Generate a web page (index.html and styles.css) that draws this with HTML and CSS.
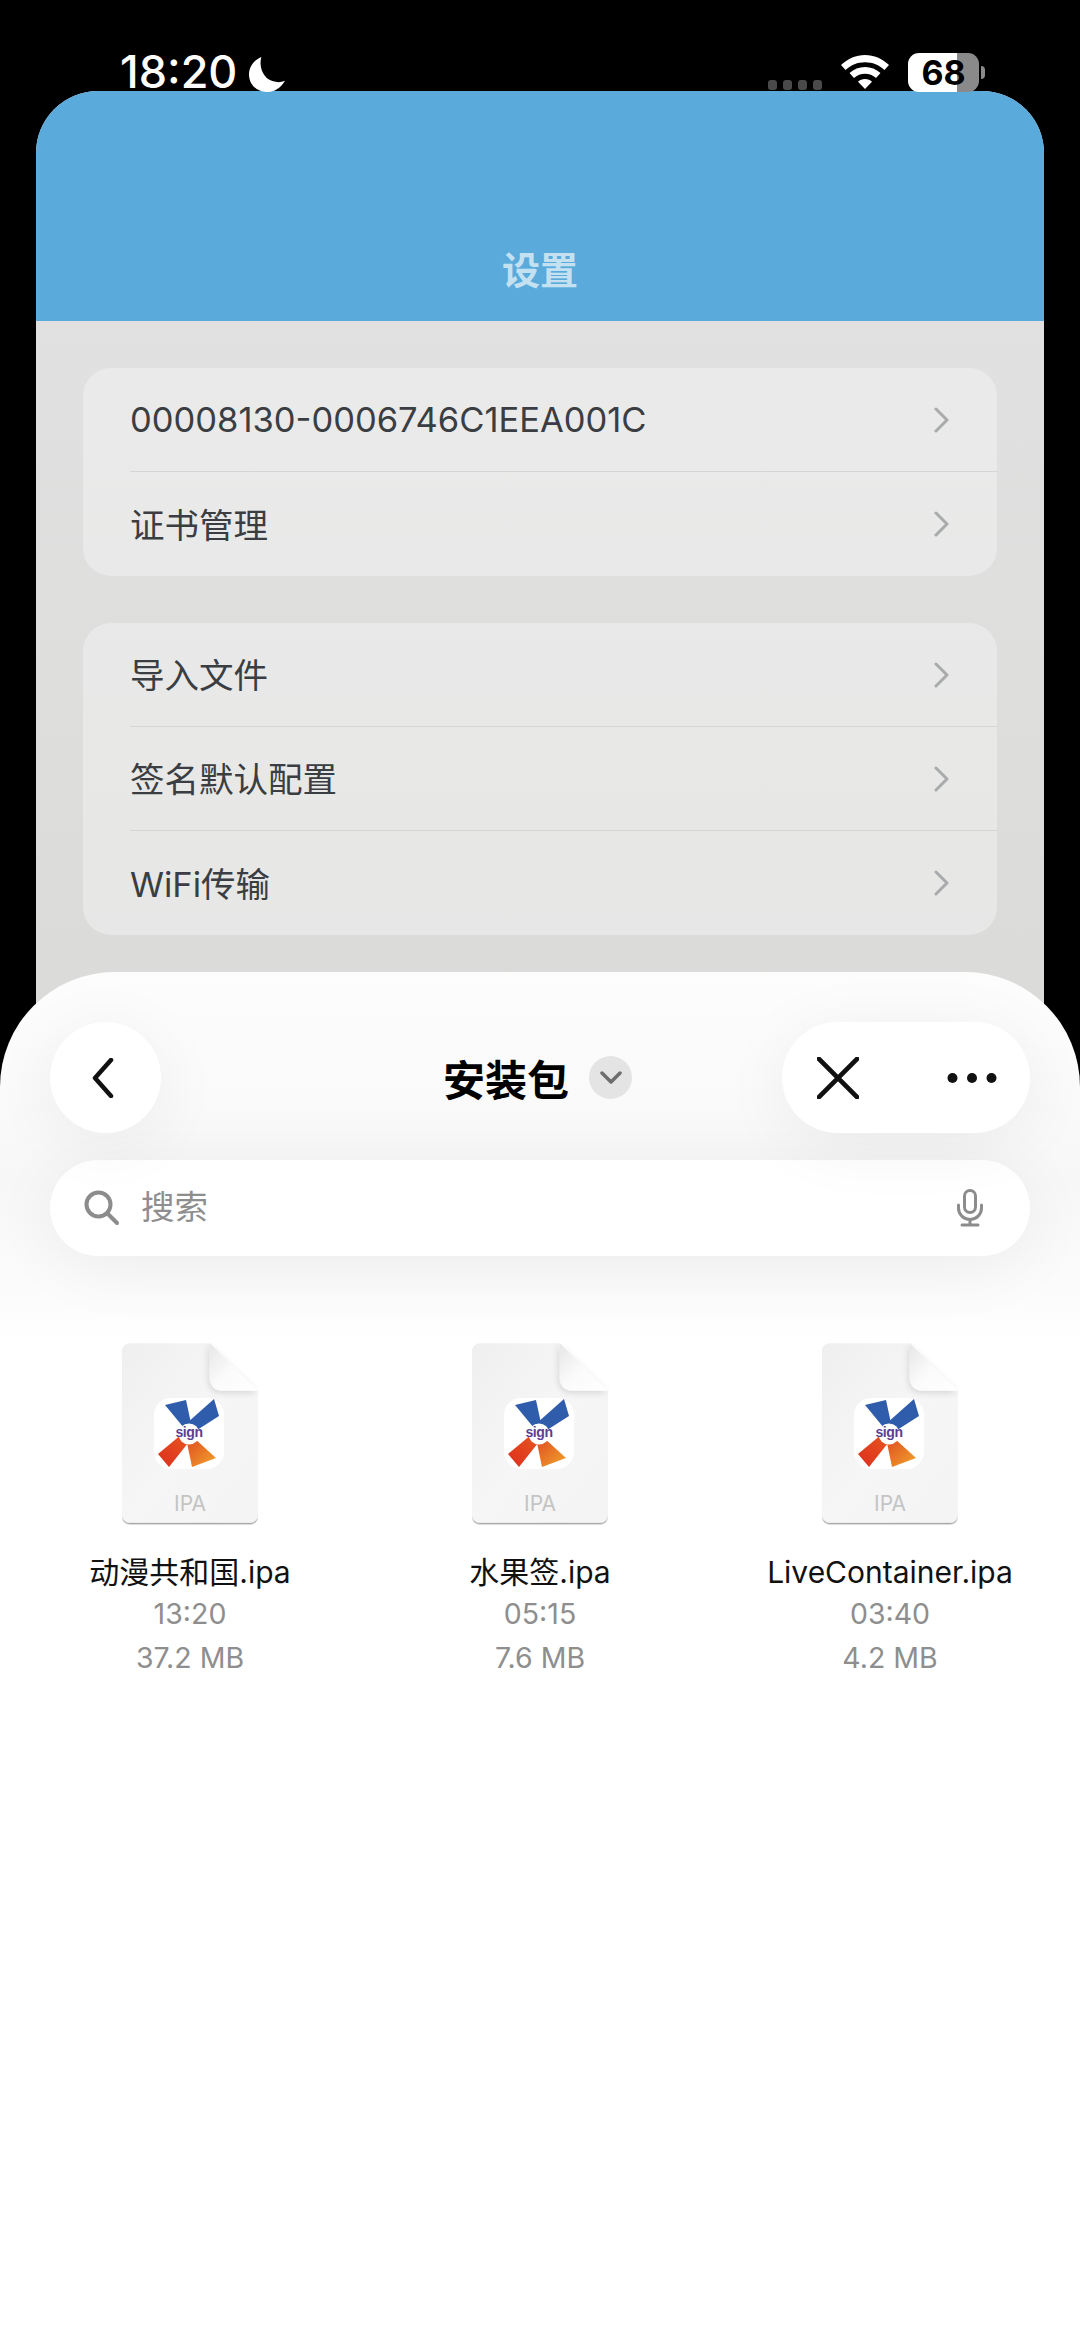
FILE: index.html
```html
<!DOCTYPE html>
<html lang="zh">
<head>
<meta charset="utf-8">
<title>安装包</title>
<link rel="stylesheet" href="styles.css">
</head>
<body>
<svg class="defs" width="0" height="0" aria-hidden="true">
  <defs>
    <linearGradient id="pageG" x1="0" y1="0" x2="1" y2="1"><stop offset="0" stop-color="#efefef"/><stop offset=".5" stop-color="#f6f6f6"/><stop offset="1" stop-color="#f4f4f4"/></linearGradient>
    <linearGradient id="foldG" x1="0" y1="0" x2="1" y2="1"><stop offset="0" stop-color="#e6e6e6"/><stop offset=".5" stop-color="#fbfbfb"/><stop offset="1" stop-color="#ffffff"/></linearGradient>
    <linearGradient id="redG" x1="0" y1="1" x2="1" y2="0"><stop offset="0" stop-color="#dc2f1f"/><stop offset="1" stop-color="#e8581f"/></linearGradient>
    <linearGradient id="orG" x1="0" y1="0" x2="1" y2="1"><stop offset="0" stop-color="#e04a22"/><stop offset="1" stop-color="#f0a52c"/></linearGradient>
    <filter id="docS" x="-10%" y="-10%" width="120%" height="120%"><feDropShadow dx="0" dy="1.500" stdDeviation="0.800" flood-color="#000" flood-opacity=".38"/></filter>
    <filter id="foldS" x="-30%" y="-30%" width="160%" height="160%"><feDropShadow dx="-1" dy="2" stdDeviation="3" flood-color="#000" flood-opacity=".14"/></filter>
    <symbol id="docIcon" viewBox="0 0 140 186">
      <path filter="url(#docS)" d="M9 1H90L139 49V175a8 8 0 0 1-8 8H9a8 8 0 0 1-8-8V9a8 8 0 0 1 8-8Z" fill="url(#pageG)"/>
      <path filter="url(#foldS)" d="M90 1 139 49H102a12 12 0 0 1-12-12Z" fill="url(#foldG)"/>
    </symbol>
    <symbol id="logoIcon" viewBox="0 0 70 71">
      <rect width="70" height="71" rx="17" fill="#fff"/>
      <path d="M11 7 32 2 38 30 30 30Z" fill="#2f5dab"/>
      <path d="M60 1 65 18 40 34 33 25Z" fill="#2f5dab"/>
      <path d="M4 56 28 36 38 40 15 69Z" fill="url(#redG)"/>
      <path d="M40 40 62 60 38 69 32 40Z" fill="url(#orG)"/>
      <circle cx="35" cy="36" r="10.500" fill="#fff"/>
    </symbol>
  </defs>
</svg>

<div class="device">
  <header class="status">
    <div class="status-left">
      <span class="time">18:20</span>
      <svg class="moon" viewBox="0 0 35 34"><path d="M12 0C5 3 0 9 0 17c0 10 8 17 17 17 8 0 14-4 18-11-3 1-6 2-9 1C15 23 9 11 12 0Z" fill="#fff"/></svg>
    </div>
    <div class="status-right">
      <div class="cell-dots"><i></i><i></i><i></i><i></i></div>
      <svg class="wifi" viewBox="0 0 48 34"><path d="M24 0c9 0 17 3.500 24 10l-4.500 5C38 10 31.500 7.300 24 7.300S10 10 4.500 15L0 10C7 3.500 15 0 24 0Z M24 12c6 0 11 2 15.500 6L35 23c-3-2.700-7-4.200-11-4.200S16 20.300 13 23l-4.500-5C13 14 18 12 24 12Z M24 24c3 0 5 1 7 2.700L24 34l-7-7.300C19 25 21 24 24 24Z" fill="#fff"/></svg>
      <div class="battery"><div class="battery-body"><span class="battery-num">68</span></div><i class="battery-tip"></i></div>
    </div>
  </header>

  <main class="screen">
    <div class="screen-head"><h1 class="screen-title">设置</h1></div>
    <div class="screen-body">
      <section class="card">
        <div class="row"><span>00008130-0006746C1EEA001C</span><svg class="chev" viewBox="0 0 16 26"><path d="M2 2l11 11L2 24" /></svg></div>
        <div class="row"><span class="cjk">证书管理</span><svg class="chev" viewBox="0 0 16 26"><path d="M2 2l11 11L2 24" /></svg></div>
      </section>
      <section class="card">
        <div class="row"><span class="cjk">导入文件</span><svg class="chev" viewBox="0 0 16 26"><path d="M2 2l11 11L2 24" /></svg></div>
        <div class="row"><span class="cjk">签名默认配置</span><svg class="chev" viewBox="0 0 16 26"><path d="M2 2l11 11L2 24" /></svg></div>
        <div class="row"><span class="cjk">WiFi传输</span><svg class="chev" viewBox="0 0 16 26"><path d="M2 2l11 11L2 24" /></svg></div>
      </section>
    </div>
  </main>

  <section class="sheet">
    <div class="nav">
      <button class="round-btn"><svg class="ic-back" viewBox="0 0 24 40"><path d="M20 2 4 20l16 18"/></svg></button>
      <div class="nav-title"><span class="nav-text">安装包</span><span class="nav-chev"><svg viewBox="0 0 22 14"><path d="M2 2l9 9 9-9"/></svg></span></div>
      <div class="pill-btn">
        <svg class="ic-x" viewBox="0 0 44 44"><path d="M2 2l40 40M42 2 2 42"/></svg>
        <svg class="ic-more" viewBox="0 0 50 12"><circle cx="5.500" cy="6" r="5"/><circle cx="25" cy="6" r="5"/><circle cx="44.500" cy="6" r="5"/></svg>
      </div>
    </div>
    <div class="search">
      <svg class="ic-search" viewBox="0 0 36 36"><circle cx="14.500" cy="14.500" r="12" /><path d="M23.500 23.500 33 33"/></svg>
      <span class="search-text">搜索</span>
      <svg class="ic-mic" viewBox="0 0 28 38"><rect x="8.500" y="1.500" width="11" height="22" rx="5.500"/><path d="M2.500 16v3a11.500 11.500 0 0 0 23 0v-3M14 30.500V35M6 36h16"/></svg>
    </div>
    <div class="files">
      <article class="file">
        <div class="doc"><svg class="doc-art"><use href="#docIcon"/></svg><svg class="logo"><use href="#logoIcon"/></svg><span class="logo-text">sign</span><span class="doc-ext">IPA</span></div>
        <div class="file-name">动漫共和国.ipa</div><div class="file-meta">13:20</div><div class="file-meta">37.2 MB</div>
      </article>
      <article class="file">
        <div class="doc"><svg class="doc-art"><use href="#docIcon"/></svg><svg class="logo"><use href="#logoIcon"/></svg><span class="logo-text">sign</span><span class="doc-ext">IPA</span></div>
        <div class="file-name">水果签.ipa</div><div class="file-meta">05:15</div><div class="file-meta">7.6 MB</div>
      </article>
      <article class="file">
        <div class="doc"><svg class="doc-art"><use href="#docIcon"/></svg><svg class="logo"><use href="#logoIcon"/></svg><span class="logo-text">sign</span><span class="doc-ext">IPA</span></div>
        <div class="file-name">LiveContainer.ipa</div><div class="file-meta">03:40</div><div class="file-meta">4.2 MB</div>
      </article>
    </div>
  </section>
</div>
</body>
</html>
```

FILE: styles.css
```css
* { box-sizing: border-box; }
html, body { margin: 0; padding: 0; background: #000; }
body { font-family: "Inter", "Noto Sans CJK SC", sans-serif; }
.defs { position: absolute; }

.device { position: relative; width: 1080px; height: 2341px; overflow: hidden; background: #000; }

.status { height: 91px; padding: 0 95px 0 120px; display: flex; justify-content: space-between; align-items: flex-end; }
.status-left { display: flex; align-items: flex-end; gap: 12px; }
.time { color: #fff; font-size: 45px; line-height: 44px; font-weight: 500; margin-bottom: -3px; }
.moon { width: 36px; height: 35px; margin-bottom: -1px; }
.status-right { display: flex; align-items: flex-end; }
.cell-dots { display: flex; gap: 6px; margin-bottom: 1px; margin-right: 19px; }
.cell-dots i { width: 9px; height: 10px; border-radius: 3px; background: #4a4a4a; }
.wifi { width: 48px; height: 34px; margin-right: 19px; margin-bottom: 2px; }
.battery { display: flex; align-items: center; gap: 2px; margin-bottom: -1px; }
.battery-body { width: 71px; height: 39px; border-radius: 11px; background: linear-gradient(90deg, #fff 0 49px, #8a8a8a 49px); display: flex; align-items: center; justify-content: center; }
.battery-num { font-size: 34px; font-weight: 700; color: #000; line-height: 1; }
.battery-tip { width: 4px; height: 13px; border-radius: 0 4px 4px 0; background: #8a8a8a; }

.screen { margin: 0 36px; height: 1000px; border-radius: 62px 62px 0 0; overflow: hidden; background: linear-gradient(180deg, #e2e3e2, #dadbd9); }
.screen-head { height: 230px; background: #5aaadb; display: flex; align-items: flex-end; justify-content: center; padding-bottom: 26px; }
.screen-title { margin: 0; font-size: 38px; line-height: 50px; font-weight: 700; color: #c4e1f2; }
.screen-body { padding: 47px 47px 0; display: flex; flex-direction: column; gap: 47px; }
.card { background: rgba(255, 255, 255, .32); border-radius: 28px; }
.row { height: 104px; margin-left: 47px; padding-right: 47px; display: flex; align-items: center; justify-content: space-between; font-size: 34.500px; color: #3a3d42; border-bottom: 1.500px solid #d4d5d4; }
.row:last-child { border-bottom: 0; }
.cjk { margin-bottom: 3px; }
.chev { width: 16px; height: 26px; fill: none; stroke: #a9aaab; stroke-width: 3; stroke-linecap: round; stroke-linejoin: round; }

.sheet { position: absolute; left: 0; right: 0; top: 972px; bottom: 0; background: linear-gradient(180deg, #fdfdfd 0, #fafafa 120px, #f7f7f7 210px, #fbfbfb 310px, #fff 370px); border-radius: 115px 115px 0 0; padding: 50px 50px 0; }
.nav { position: relative; display: flex; align-items: center; justify-content: space-between; height: 111px; }
.round-btn { width: 111px; height: 111px; border: 0; padding: 0; border-radius: 50%; background: #fff; box-shadow: 0 10px 70px rgba(0, 0, 0, .06); display: flex; align-items: center; justify-content: center; margin: 0; }
.ic-back { width: 24px; height: 40px; margin-right: 6px; fill: none; stroke: #111; stroke-width: 4.500; stroke-linecap: round; stroke-linejoin: round; }
.nav-title { position: absolute; left: 393px; top: 0; height: 111px; display: flex; align-items: center; gap: 20px; }
.nav-text { font-size: 42px; font-weight: 700; color: #000; }
.nav-chev { width: 43px; height: 43px; border-radius: 50%; background: #e4e4e4; display: flex; align-items: center; justify-content: center; }
.nav-chev svg { width: 22px; height: 14px; fill: none; stroke: #6e6e6e; stroke-width: 3.500; stroke-linecap: round; stroke-linejoin: round; }
.pill-btn { width: 248px; height: 111px; border-radius: 56px; background: #fff; box-shadow: 0 10px 70px rgba(0, 0, 0, .06); display: flex; align-items: center; justify-content: space-between; padding: 0 33px 0 35px; }
.ic-x { width: 42px; height: 42px; fill: none; stroke: #111; stroke-width: 5; stroke-linecap: round; }
.ic-more { width: 50px; height: 12px; fill: #111; }

.search { margin-top: 27px; height: 96px; border-radius: 48px; background: #fff; box-shadow: 0 10px 70px rgba(0, 0, 0, .06); display: flex; align-items: center; padding: 0 46px 0 34px; }
.ic-search { width: 36px; height: 36px; fill: none; stroke: #8c8c8c; stroke-width: 4; stroke-linecap: round; }
.search-text { margin-left: 21px; font-size: 33.500px; line-height: 44px; margin-top: -3px; color: #8e8e8e; }
.ic-mic { margin-left: auto; width: 28px; height: 38px; fill: none; stroke: #8c8c8c; stroke-width: 3; stroke-linecap: round; }

.files { margin: 86px -35px 0; display: grid; grid-template-columns: repeat(3, 1fr); }
.file { display: flex; flex-direction: column; align-items: center; }
.doc { position: relative; width: 138px; height: 184px; margin-bottom: 26px; }
.doc-art { width: 138px; height: 184px; display: block; }
.logo { position: absolute; left: 33px; top: 56px; width: 70px; height: 71px; }
.logo-text { position: absolute; left: 33px; top: 82px; width: 70px; text-align: center; font-size: 14px; line-height: 16px; font-weight: 700; color: #5b3f92; letter-spacing: -.4px; font-family: "Liberation Sans", sans-serif; }
.doc-ext { position: absolute; left: 0; right: 0; top: 149px; text-align: center; font-size: 21px; line-height: 26px; color: #c4c4c4; }
.file-name { font-size: 30px; line-height: 40px; color: #111; white-space: nowrap; }
.file-meta { font-size: 28.500px; line-height: 43.500px; color: #8e8e8e; white-space: nowrap; }
```
